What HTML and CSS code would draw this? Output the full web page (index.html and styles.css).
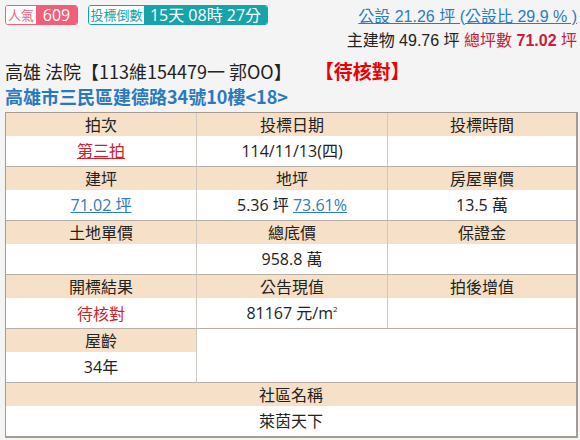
FILE: index.html
```html
<!DOCTYPE html>
<html lang="zh-Hant">
<head>
<meta charset="utf-8">
<link rel="stylesheet" href="styles.css">
</head>
<body>
<div class="page">
  <div class="top">
    <div class="badges">
      <span class="badge pink"><span class="lbl">人氣</span><span class="val">609</span></span>
      <span class="badge teal"><span class="lbl">投標倒數</span><span class="val">15天 08時 27分</span></span>
    </div>
    <div class="area">
      <div class="line1"><a class="pub">公設 21.26 坪 (公設比 29.9 % )</a></div>
      <div class="line2">主建物 49.76 坪 <span class="tot">總坪數 <b>71.02</b> 坪</span></div>
    </div>
  </div>
  <div class="title">高雄 法院【113維154479一 郭OO】 <span class="status">【待核對】</span></div>
  <div class="addr">高雄市三民區建德路34號10樓&lt;18&gt;</div>
  <div class="grid">
    <div class="cell"><div class="h">拍次</div><div class="v"><a class="red">第三拍</a></div></div>
    <div class="cell"><div class="h">投標日期</div><div class="v">114/11/13(四)</div></div>
    <div class="cell"><div class="h">投標時間</div><div class="v"></div></div>

    <div class="cell"><div class="h">建坪</div><div class="v"><a class="blue">71.02 坪</a></div></div>
    <div class="cell"><div class="h">地坪</div><div class="v">5.36 坪 <a class="blue">73.61%</a></div></div>
    <div class="cell"><div class="h">房屋單價</div><div class="v">13.5 萬</div></div>

    <div class="cell"><div class="h">土地單價</div><div class="v"></div></div>
    <div class="cell"><div class="h">總底價</div><div class="v">958.8 萬</div></div>
    <div class="cell"><div class="h">保證金</div><div class="v"></div></div>

    <div class="cell"><div class="h">開標結果</div><div class="v"><span class="redtxt">待核對</span></div></div>
    <div class="cell"><div class="h">公告現值</div><div class="v">81167 元/m<sup class="sq">2</sup></div></div>
    <div class="cell"><div class="h">拍後增值</div><div class="v"></div></div>

    <div class="cell"><div class="h">屋齡</div><div class="v">34年</div></div>
    <div class="cell span2"></div>

    <div class="cell span3"><div class="h">社區名稱</div><div class="v">萊茵天下</div></div>
  </div>
</div>
</body>
</html>
```
FILE: styles.css
```css
html, body {
  margin: 0;
  padding: 0;
  background: #f4f4f4;
}
body {
  font-family: "Open Sans", "Noto Sans CJK TC", sans-serif;
  color: #222;
}
.page {
  padding: 5px 2px 0 5px;
}
.top {
  display: flex;
  justify-content: space-between;
  align-items: flex-start;
}
.badges {
  display: flex;
  gap: 10px;
}
.badge {
  display: inline-flex;
  align-items: stretch;
  box-sizing: border-box;
  height: 20px;
  border-radius: 3px;
  font-family: "Noto Sans CJK TC", sans-serif;
}
.badge .lbl {
  background: #fff;
  font-size: 13px;
  line-height: 18px;
  text-align: center;
  border-radius: 2px 0 0 2px;
}
.badge .val {
  color: #fff;
  font-size: 16px;
  line-height: 18px;
  text-align: center;
  border-radius: 0 2px 2px 0;
  font-family: "Open Sans", "Noto Sans CJK TC", sans-serif;
}
.badge.pink { border: 1px solid #ef5f7a; }
.badge.pink .lbl { color: #ef5f7a; width: 30px; }
.badge.pink .val { background: #ef5f7a; width: 41px; }
.badge.teal { border: 1px solid #16a4a9; }
.badge.teal .lbl { color: #16a4a9; width: 55px; }
.badge.teal .val { background: #16a4a9; width: 123px; }
.area {
  text-align: right;
  font-family: "Liberation Sans", "Noto Sans CJK TC", sans-serif;
  font-size: 16px;
  line-height: 18px;
  padding-right: 1px;
}
.line1 {
  padding-top: 3px;
}
.pub {
  color: #2e7bbd;
  text-decoration: underline;
  text-decoration-color: #2e7bbd;
}
.line2 {
  margin-top: 6px;
  color: #222;
}
.tot {
  color: #c8203c;
}
.tot b { font-weight: bold; }
.title {
  margin-top: 9px;
  font-family: "Noto Sans CJK TC", sans-serif;
  font-size: 18px;
  line-height: 24px;
  color: #222;
}
.status {
  color: #e00;
  font-weight: bold;
  font-size: 19px;
  margin-left: 19px;
}
.addr {
  font-family: "Noto Sans CJK TC", sans-serif;
  font-size: 18px;
  line-height: 23px;
  font-weight: bold;
  color: #2a79be;
  margin-top: 2px;
}
.grid {
  margin-top: 4px;
  display: grid;
  grid-template-columns: 191px 191px 1fr;
  border: 1px solid #a89a8c;
  border-right-width: 2px;
  border-bottom-width: 2px;
  background: #fff;
  font-family: "Open Sans", "Noto Sans CJK TC", sans-serif;
  font-size: 16px;
}
.cell {
  border-right: 1px solid #cfc8c0;
  border-bottom: 1px solid #b8b0a8;
  text-align: center;
  min-height: 53px;
}
.cell:nth-child(3n) { border-right: none; }
.span2 { grid-column: span 2; border-right: none; }
.span3 { grid-column: span 3; border-right: none; border-bottom: none; }
.h {
  height: 23px;
  line-height: 23px;
  background: #f6e0c8;
  color: #222;
  font-family: "Noto Sans CJK TC", sans-serif;
}
.v {
  height: 30px;
  line-height: 30px;
  color: #222;
}
.sq {
  font-size: 8px;
  vertical-align: 7px;
  line-height: 0;
}
.red {
  color: #d0202c;
  text-decoration: underline;
}
.redtxt { color: #d0202c; font-family: "Noto Sans CJK TC", sans-serif; }
.blue {
  color: #2e7bbd;
  text-decoration: underline;
}
```
